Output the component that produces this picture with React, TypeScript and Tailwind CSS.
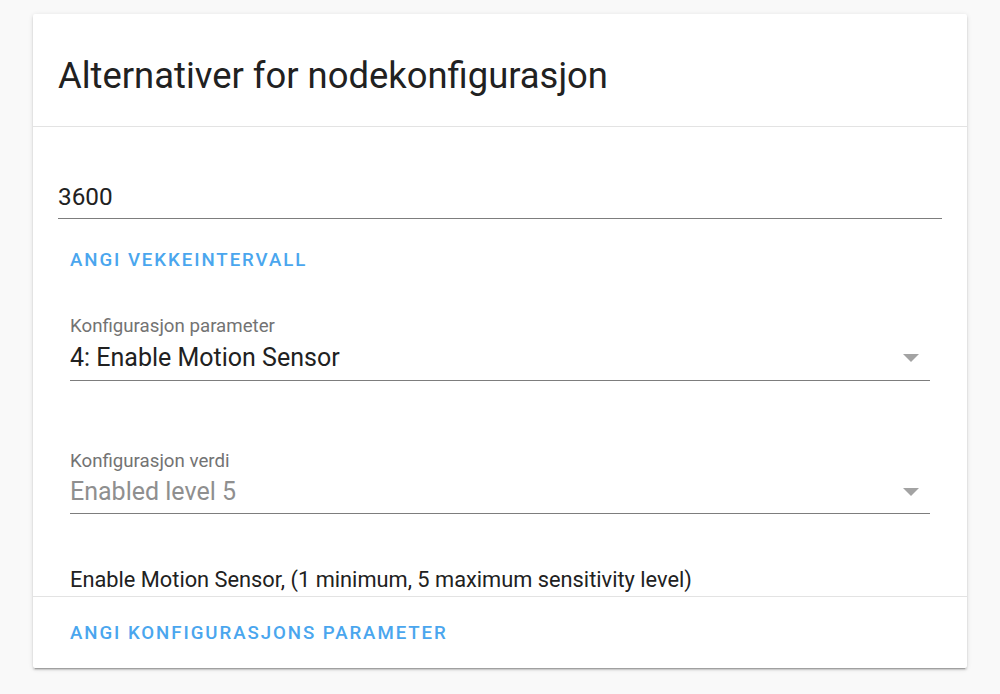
import React from "react";

function Arrow() {
  return (
    <svg width="16" height="8" viewBox="0 0 16 8" className="mr-[11px] shrink-0">
      <path d="M0 0 L16 0 L8 8 Z" fill="#a3a3a3" />
    </svg>
  );
}

function SelectField({ label, value, muted, gap, pb }: { label: string; value: string; muted?: boolean; gap: string; pb: string }) {
  return (
    <div className="border-b border-[#7d7d7d]">
      <div className="text-[18.7px] leading-[20px] text-[#737373]">{label}</div>
      <div className={`flex items-center justify-between ${gap} ${pb}`}>
        <span className={`text-[25px] leading-[26px] ${muted ? "text-[#8f8f8f]" : "text-[#212121]"}`}>{value}</span>
        <Arrow />
      </div>
    </div>
  );
}

export default function App() {
  return (
    <div className="min-h-[694px] bg-[#f9f9f9] pt-[14px] px-[33px]" style={{ fontFamily: "Roboto, 'Liberation Sans', sans-serif" }}>
      <div className="h-[654px] bg-white rounded-[2px] shadow-[0_2px_2px_rgba(0,0,0,0.14),0_1px_5px_rgba(0,0,0,0.12),0_3px_1px_-2px_rgba(0,0,0,0.2)]">
        <div className="h-[113px] border-b border-[#e3e3e3] px-[25px] pt-[43px]">
          <h2 className="text-[36.4px] leading-[37px] text-[#212121] font-normal">Alternativer for nodekonfigurasjon</h2>
        </div>
        <div className="px-[25px]">
          <div className="mt-[58px] border-b border-[#7d7d7d] pb-[9px]">
            <div className="text-[24.3px] leading-[24px] text-[#212121]">3600</div>
          </div>
          <div className="mt-[31px] px-[12px]">
            <span className="block text-[18.67px] leading-[20px] font-medium tracking-[1.93px] text-[#4aa6ee]">ANGI VEKKEINTERVALL</span>
          </div>
          <div className="px-[12px] mt-[46px]">
            <SelectField label="Konfigurasjon parameter" value="4: Enable Motion Sensor" gap="mt-[9px]" pb="pb-[9px]" />
          </div>
          <div className="px-[12px] mt-[70px]">
            <SelectField label="Konfigurasjon verdi" value="Enabled level 5" muted gap="mt-[8px]" pb="pb-[8px]" />
          </div>
          <div className="px-[12px] mt-[55px] pb-[5px]">
            <div className="text-[21.8px] leading-[22px] text-[#212121]">Enable Motion Sensor, (1 minimum, 5 maximum sensitivity level)</div>
          </div>
        </div>
        <div className="border-t border-[#e3e3e3] px-[37px] pt-[26px] pb-[25px]">
          <span className="block text-[18.67px] leading-[20px] font-medium tracking-[1.93px] text-[#4aa6ee]">ANGI KONFIGURASJONS PARAMETER</span>
        </div>
      </div>
    </div>
  );
}
